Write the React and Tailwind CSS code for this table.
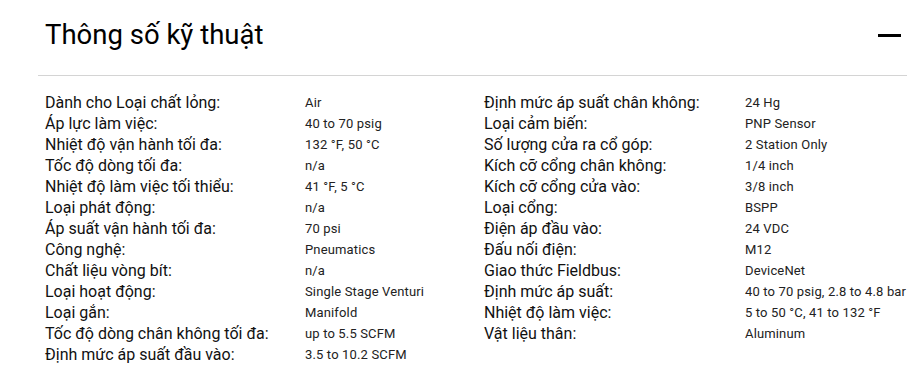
const left = [
  ['Dành cho Loại chất lỏng:', 'Air'],
  ['Áp lực làm việc:', '40 to 70 psig'],
  ['Nhiệt độ vận hành tối đa:', '132 °F, 50 °C'],
  ['Tốc độ dòng tối đa:', 'n/a'],
  ['Nhiệt độ làm việc tối thiểu:', '41 °F, 5 °C'],
  ['Loại phát động:', 'n/a'],
  ['Áp suất vận hành tối đa:', '70 psi'],
  ['Công nghệ:', 'Pneumatics'],
  ['Chất liệu vòng bít:', 'n/a'],
  ['Loại hoạt động:', 'Single Stage Venturi'],
  ['Loại gắn:', 'Manifold'],
  ['Tốc độ dòng chân không tối đa:', 'up to 5.5 SCFM'],
  ['Định mức áp suất đầu vào:', '3.5 to 10.2 SCFM'],
]

const right = [
  ['Định mức áp suất chân không:', '24 Hg'],
  ['Loại cảm biến:', 'PNP Sensor'],
  ['Số lượng cửa ra cổ góp:', '2 Station Only'],
  ['Kích cỡ cổng chân không:', '1/4 inch'],
  ['Kích cỡ cổng cửa vào:', '3/8 inch'],
  ['Loại cổng:', 'BSPP'],
  ['Điện áp đầu vào:', '24 VDC'],
  ['Đấu nối điện:', 'M12'],
  ['Giao thức Fieldbus:', 'DeviceNet'],
  ['Định mức áp suất:', '40 to 70 psig, 2.8 to 4.8 bar'],
  ['Nhiệt độ làm việc:', '5 to 50 °C, 41 to 132 °F'],
  ['Vật liệu thân:', 'Aluminum'],
]

const SpecList = ({ rows, className }) => (
  <dl className={`grid grid-cols-[260px_1fr] auto-rows-[21px] items-center ${className}`}>
    {rows.map(([label, value]) => (
      <div key={label} className="contents">
        <dt className="text-[16px] leading-[21px] text-[#111] whitespace-nowrap">{label}</dt>
        <dd className="text-[13px] tracking-[0.15px] leading-[21px] text-[#222] whitespace-nowrap">{value}</dd>
      </div>
    ))}
  </dl>
)

const App = () => {
  return (
    <div className="w-[919px] h-[380px] bg-white font-['Roboto',sans-serif] overflow-hidden">
      <header className="flex items-center justify-between pl-[45px] pr-[18px] h-[75px]">
        <h2 className="text-[27.5px] leading-none text-black -mt-[5px]">Thông số kỹ thuật</h2>
        <button className="w-[23px] h-[23px] flex items-center justify-center -mt-[5px]">
          <span className="block w-[23px] h-[3px] bg-black" />
        </button>
      </header>
      <div className="ml-[38px] mr-[12px] border-t border-[#d4d4d4]" />
      <div className="flex pl-[45px] pt-[16px]">
        <SpecList rows={left} className="w-[439px]" />
        <SpecList rows={right} className="flex-1 grid-cols-[261px_1fr]" />
      </div>
    </div>
  )
}

export default App
